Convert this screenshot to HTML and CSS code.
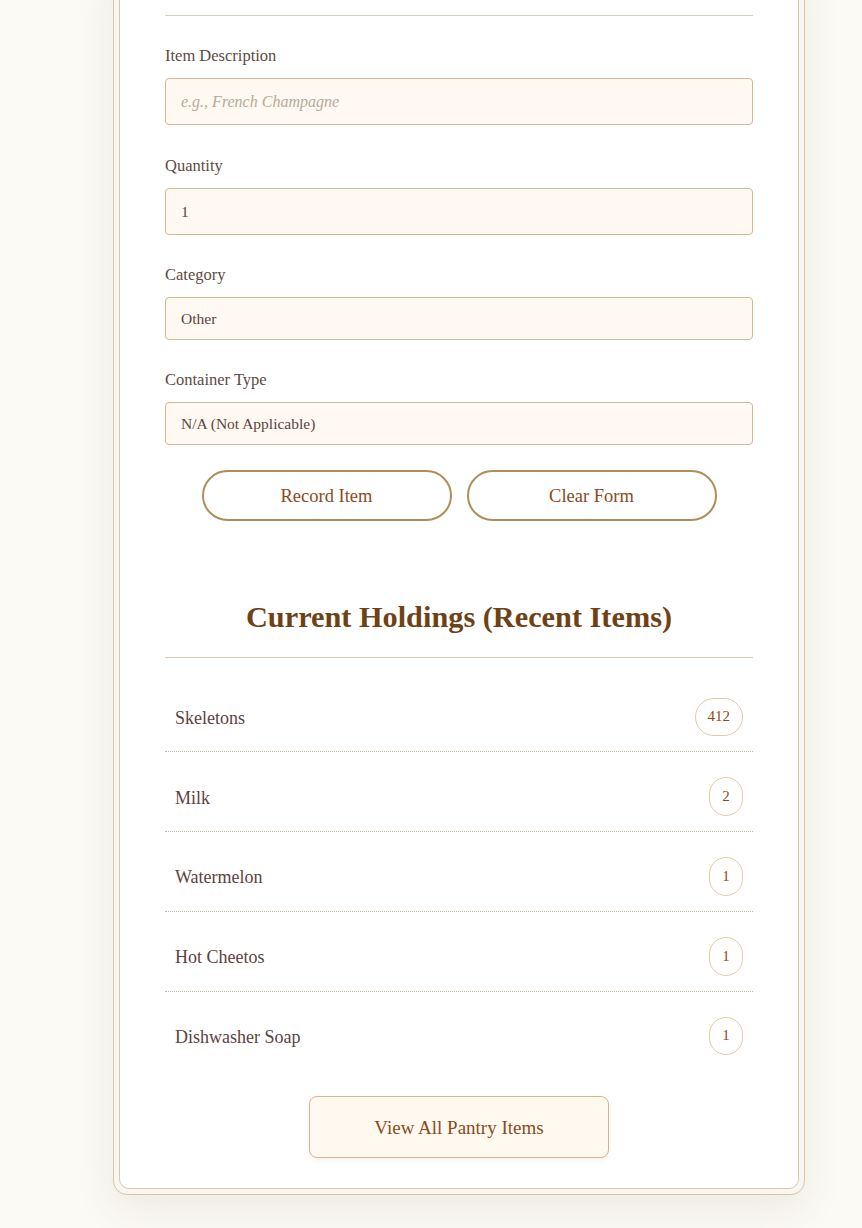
FILE: index.html
```html
<!DOCTYPE html>
<html lang="en">
<head>
<meta charset="utf-8">
<title>Pantry Ledger</title>
<link rel="stylesheet" href="styles.css">
</head>
<body>
<div class="page">
  <div class="frame">
    <div class="card">
      <hr class="divider">

      <form class="entry-form">
        <div class="field">
          <label class="field-label" for="desc">Item Description</label>
          <input class="field-input" id="desc" type="text" placeholder="e.g., French Champagne">
        </div>
        <div class="field">
          <label class="field-label" for="qty">Quantity</label>
          <input class="field-input" id="qty" type="text" value="1">
        </div>
        <div class="field">
          <label class="field-label" for="cat">Category</label>
          <select class="field-select" id="cat">
            <option>Other</option>
          </select>
        </div>
        <div class="field">
          <label class="field-label" for="cont">Container Type</label>
          <select class="field-select" id="cont">
            <option>N/A (Not Applicable)</option>
          </select>
        </div>
        <div class="actions">
          <button type="button" class="pill-btn">Record Item</button>
          <button type="button" class="pill-btn">Clear Form</button>
        </div>
      </form>

      <section class="holdings">
        <h2 class="section-title">Current Holdings (Recent Items)</h2>
        <ul class="item-list">
          <li class="item-row"><span class="item-name">Skeletons</span><span class="qty-badge">412</span></li>
          <li class="item-row"><span class="item-name">Milk</span><span class="qty-badge">2</span></li>
          <li class="item-row"><span class="item-name">Watermelon</span><span class="qty-badge">1</span></li>
          <li class="item-row"><span class="item-name">Hot Cheetos</span><span class="qty-badge">1</span></li>
          <li class="item-row"><span class="item-name">Dishwasher Soap</span><span class="qty-badge">1</span></li>
        </ul>
        <div class="view-all-wrap">
          <button type="button" class="view-all">View All Pantry Items</button>
        </div>
      </section>
    </div>
  </div>
</div>
</body>
</html>
```

FILE: styles.css
```css
* { box-sizing: border-box; }

html {
  margin: 0;
  padding: 0;
  background: #fcfaf5;
  overflow: hidden;
}

body {
  margin: 0;
  padding: 0;
  min-height: 100vh;
  background: #fcfaf5;
  font-family: "Liberation Serif", "Times New Roman", serif;
  color: #5c4a42;
}

.page {
  padding-left: 113px;
  padding-bottom: 40px;
}

.frame {
  width: 692px;
  margin-top: -40px;
  border: 1px solid #dcc6a6;
  border-radius: 14px;
  padding: 5px;
  background: #f8f6f2;
  box-shadow: 0 14px 40px rgba(80, 65, 35, 0.09);
}

.card {
  background: #ffffff;
  border: 1px solid #dcc6a6;
  border-radius: 10px;
  padding: 48px 45px 30px;
}

.divider {
  margin: 0 0 27px;
  border: 0;
  border-top: 1px solid #dccab3;
  height: 0;
}

.field {
  margin-bottom: 27px;
}

.field:first-child {
  margin-bottom: 28px;
}

.field-label {
  display: block;
  font-size: 16.5px;
  line-height: 24px;
  padding-top: 1px;
  margin-bottom: 10px;
  color: #5d4b43;
}

.field-input,
.field-select {
  display: block;
  width: 100%;
  margin: 0;
  border: 1px solid #d6b994;
  border-radius: 4px;
  background: #fff9f1;
  font-family: "Liberation Serif", "Times New Roman", serif;
  font-size: 15.5px;
  color: #5c4442;
  padding: 0 15px;
  outline: none;
}

.field-input {
  height: 47px;
}

.field-select {
  height: 43px;
  appearance: none;
  -webkit-appearance: none;
}

.field-input::placeholder {
  font-style: italic;
  color: #b9a998;
  font-size: 16px;
}

.actions {
  display: flex;
  justify-content: center;
  gap: 15px;
  margin-top: -2px;
}

.pill-btn {
  width: 250px;
  height: 51px;
  border: 2px solid #b08d57;
  border-radius: 26px;
  background: #ffffff;
  font-family: "Liberation Serif", "Times New Roman", serif;
  font-size: 18.5px;
  padding-top: 2px;
  color: #8b4a1c;
  cursor: pointer;
}

.section-title {
  margin: 76px 0 0;
  padding-bottom: 20px;
  border-bottom: 1px solid #dccab3;
  text-align: center;
  font-family: "Liberation Serif", "Times New Roman", serif;
  font-weight: 700;
  font-size: 30.3px;
  line-height: 40px;
  color: #6f4216;
}

.item-list {
  list-style: none;
  margin: 24.5px 0 0;
  padding: 0;
}

.item-row {
  display: flex;
  align-items: center;
  justify-content: space-between;
  padding: 15px 10px;
  border-bottom: 1px dotted #c9b39b;
  margin-bottom: 10px;
}

.item-row:last-child {
  border-bottom: none;
  margin-bottom: 0;
}

.item-name {
  font-size: 18px;
  padding-top: 3px;
  color: #5c4340;
}

.qty-badge {
  display: inline-flex;
  align-items: center;
  justify-content: center;
  min-width: 34px;
  height: 38.75px;
  padding: 0 12px;
  border: 1px solid #e2cba9;
  border-radius: 20px;
  font-size: 15px;
  color: #8b4a1c;
  background: #ffffff;
}

.view-all-wrap {
  display: flex;
  justify-content: center;
  margin-top: 26px;
}

.view-all {
  width: 300px;
  height: 62px;
  border: 1px solid #d9b58f;
  border-radius: 8px;
  background: #fff9f0;
  font-family: "Liberation Serif", "Times New Roman", serif;
  font-size: 19px;
  padding-top: 2px;
  color: #8b4a1c;
  box-shadow: 0 2px 6px rgba(120, 90, 50, 0.08);
  cursor: pointer;
}
```
